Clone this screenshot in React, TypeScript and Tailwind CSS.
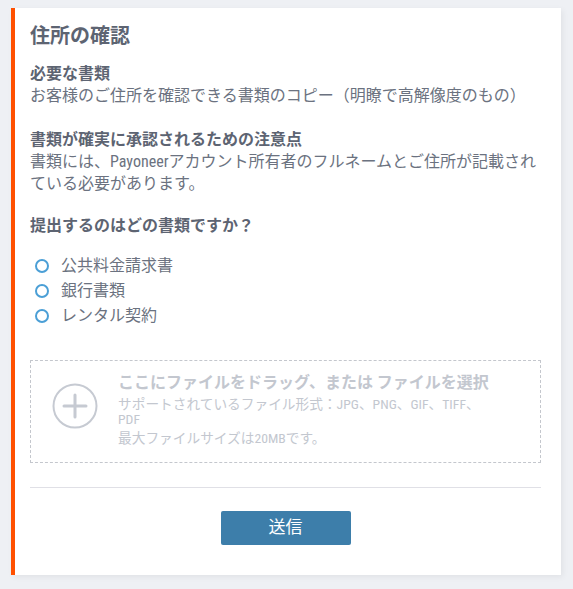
function L({ children }: { children: string }) {
  return <span className="font-['Liberation_Sans_Narrow','Roboto_Condensed',Roboto,sans-serif]">{children}</span>;
}

export default function App() {
  const options = ["公共料金請求書", "銀行書類", "レンタル契約"];

  return (
    <div
      className="min-h-[589px] bg-[#eef0f4] pt-[8px] pb-[14px]"
      style={{ fontFamily: 'Roboto, "Noto Sans CJK JP", sans-serif' }}
    >
      <div className="ml-[11px] w-[550px] border-l-4 border-[#ff5000] bg-white pl-[15px] pr-[20px] pt-[14px] pb-[30px] shadow-[2px_2px_6px_rgba(0,0,0,0.06)]">
        <h1 className="text-[20px] font-bold leading-[28px] text-[#5d6472]">住所の確認</h1>

        <section className="mt-[13px] text-[16px] leading-[22px] text-[#6b7280]">
          <h2 className="font-bold text-[#5d6472]">必要な書類</h2>
          <p>お客様のご住所を確認できる書類のコピー（明瞭で高解像度のもの）</p>
        </section>

        <section className="mt-[22px] text-[16px] leading-[22px] text-[#6b7280]">
          <h2 className="font-bold text-[#5d6472]">書類が確実に承認されるための注意点</h2>
          <p>
            書類には、<L>Payoneer</L>アカウント所有者のフルネームとご住所が記載されている必要があります。
          </p>
        </section>

        <h2 className="mt-[20px] text-[16px] font-bold leading-[22px] text-[#5d6472]">
          提出するのはどの書類ですか？
        </h2>

        <ul className="mt-[18px] flex flex-col gap-[3px]">
          {options.map((o) => (
            <li key={o} className="flex items-center gap-[12px] pl-[5px] text-[16px] leading-[22px] text-[#6b7280]">
              <span className="h-[14px] w-[14px] rounded-full border-2 border-[#4b9fd6]" />
              {o}
            </li>
          ))}
        </ul>

        <div className="mt-[33px] flex items-center gap-[20px] border border-dashed border-[#c4c7cd] pt-[11px] pb-[16px] pl-[21px] pr-[45px]">
          <svg width="46" height="46" viewBox="0 0 46 46" fill="none" className="-mt-[6px] shrink-0">
            <circle cx="23" cy="23" r="21.5" stroke="#c6cad2" strokeWidth="2" />
            <path d="M23 12v22M12 23h22" stroke="#c6cad2" strokeWidth="3" strokeLinecap="round" />
          </svg>
          <div className="text-[#c3c7cf]">
            <div className="text-[16px] font-bold leading-[22px]">ここにファイルをドラッグ、または ファイルを選択</div>
            <div className="mt-[3px] text-[13.7px] leading-[15px]">
              サポートされているファイル形式：<L>JPG</L>、<L>PNG</L>、<L>GIF</L>、<L>TIFF</L>、<L>PDF</L>
            </div>
            <div className="mt-[3.5px] text-[13.7px] leading-[15px]">
              最大ファイルサイズは<L>20MB</L>です。
            </div>
          </div>
        </div>

        <div className="mt-[24px] border-t border-[#e0e0e6]" />

        <div className="mt-[23px] flex justify-center">
          <button className="h-[34px] w-[130px] rounded-[2px] bg-[#3d7eaa] text-[17px] text-white">送信</button>
        </div>
      </div>
    </div>
  );
}
